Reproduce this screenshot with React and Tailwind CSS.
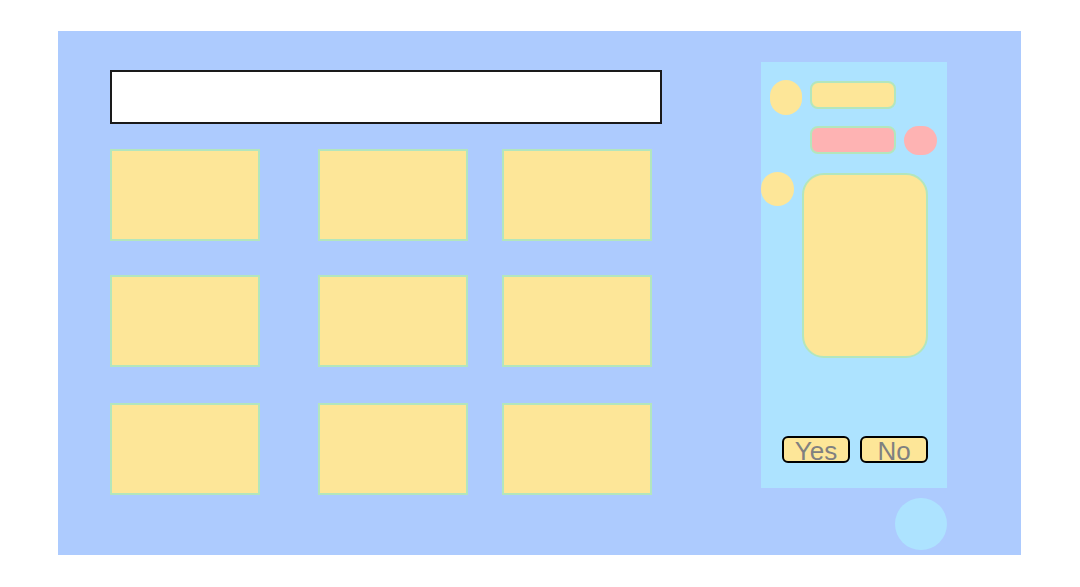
export default function App() {
  const card = "w-[150px] h-[92px] bg-[#fde698] border-2 border-[#b3e6bd]";
  const btn = "w-[68px] h-[27px] rounded-[6px] bg-[#fde698] border-2 border-black text-[26px] leading-none text-[#808080] flex items-end justify-center overflow-visible";
  return (
    <div className="w-[1080px] h-[587px] bg-white pt-[31px] pl-[58px] overflow-hidden" style={{ fontFamily: '"Liberation Sans", Arial, sans-serif' }}>
      <div className="w-[963px] h-[524px] bg-[#adcbfe] flex">
        <div className="ml-[52px] mt-[39px] flex flex-col">
          <div className="w-[552px] h-[54px] bg-white border-2 border-[#1a1a1a]" />
          <div className="mt-[25px] flex">
            <div className={card} />
            <div className={card + " ml-[58px]"} />
            <div className={card + " ml-[34px]"} />
          </div>
          <div className="mt-[34px] flex">
            <div className={card} />
            <div className={card + " ml-[58px]"} />
            <div className={card + " ml-[34px]"} />
          </div>
          <div className="mt-[36px] flex">
            <div className={card} />
            <div className={card + " ml-[58px]"} />
            <div className={card + " ml-[34px]"} />
          </div>
        </div>
        <div className="ml-[99px] mt-[31px] flex flex-col">
          <div className="w-[186px] h-[426px] bg-[#ade3ff] flex flex-col">
            <div className="mt-[18px] flex items-start">
              <div className="ml-[9px] w-[32px] h-[35px] rounded-full bg-[#fde698]" />
              <div className="ml-[8px] mt-[1px] w-[86px] h-[28px] rounded-[8px] bg-[#fde698] border-2 border-[#b3e6bd]" />
            </div>
            <div className="mt-[11px] flex items-start">
              <div className="ml-[49px] w-[86px] h-[28px] rounded-[8px] bg-[#feb3b3] border-2 border-[#b3e6bd]" />
              <div className="ml-[8px] w-[33px] h-[29px] rounded-full bg-[#feb3b3]" />
            </div>
            <div className="mt-[17px] flex items-start">
              <div className="w-[33px] h-[34px] rounded-full bg-[#fde698]" />
              <div className="ml-[8px] mt-[1px] w-[126px] h-[185px] rounded-[22px] bg-[#fde698] border-2 border-[#b3e6bd]" />
            </div>
            <div className="mt-[78px] ml-[21px] flex">
              <button className={btn}><span className="translate-y-[3px]">Yes</span></button>
              <button className={btn + " ml-[10px]"}><span className="translate-y-[3px]">No</span></button>
            </div>
          </div>
          <div className="mt-[10px] self-end w-[52px] h-[52px] rounded-full bg-[#ade3ff]" />
        </div>
      </div>
    </div>
  );
}
